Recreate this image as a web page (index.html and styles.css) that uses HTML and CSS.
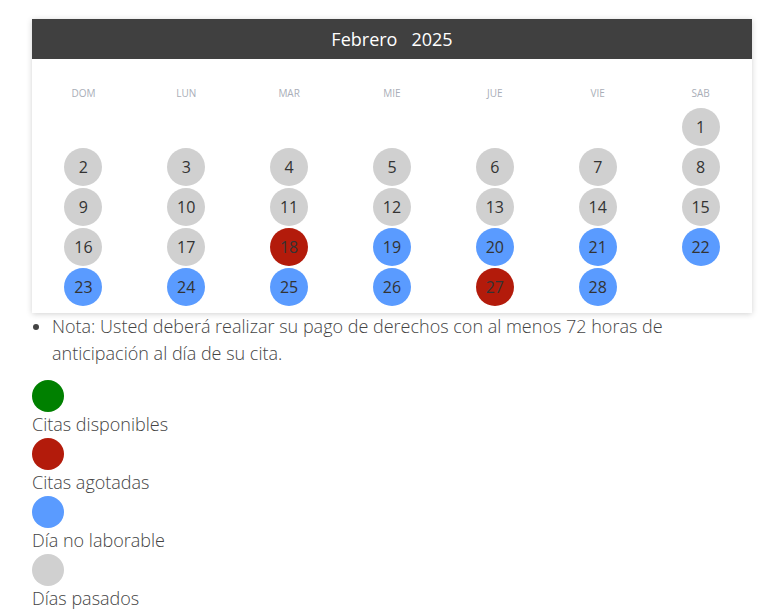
FILE: index.html
```html
<!DOCTYPE html>
<html lang="es">
<head>
<meta charset="utf-8">
<title>Calendario</title>
<link rel="stylesheet" href="styles.css">
</head>
<body>
<div class="page">
  <div class="calendar">
    <div class="cal-header">Febrero&nbsp;&nbsp; 2025</div>
    <div class="weekdays">
      <span>DOM</span><span>LUN</span><span>MAR</span><span>MIE</span><span>JUE</span><span>VIE</span><span>SAB</span>
    </div>
    <div class="days">
      <span class="empty"></span><span class="empty"></span><span class="empty"></span><span class="empty"></span><span class="empty"></span><span class="empty"></span>
      <span class="day past">1</span>
      <span class="day past">2</span><span class="day past">3</span><span class="day past">4</span><span class="day past">5</span><span class="day past">6</span><span class="day past">7</span><span class="day past">8</span>
      <span class="day past">9</span><span class="day past">10</span><span class="day past">11</span><span class="day past">12</span><span class="day past">13</span><span class="day past">14</span><span class="day past">15</span>
      <span class="day past">16</span><span class="day past">17</span><span class="day full">18</span><span class="day off">19</span><span class="day off">20</span><span class="day off">21</span><span class="day off">22</span>
      <span class="day off">23</span><span class="day off">24</span><span class="day off">25</span><span class="day off">26</span><span class="day full">27</span><span class="day off">28</span>
    </div>
  </div>
  <ul class="note">
    <li>Nota: Usted deberá realizar su pago de derechos con al menos 72 horas de anticipación al día de su cita.</li>
  </ul>
  <div class="legend">
    <div class="legend-item"><span class="dot available"></span><span class="label">Citas disponibles</span></div>
    <div class="legend-item"><span class="dot full"></span><span class="label">Citas agotadas</span></div>
    <div class="legend-item"><span class="dot off"></span><span class="label">Día no laborable</span></div>
    <div class="legend-item"><span class="dot past"></span><span class="label">Días pasados</span></div>
  </div>
</div>
</body>
</html>
```
FILE: styles.css
```css
* { box-sizing: border-box; }
body {
  margin: 0;
  font-family: "Open Sans", "Liberation Sans", sans-serif;
  color: #444;
  background: #fff;
}
.page {
  padding: 19px 19px 0 32px;
}
.calendar {
  width: 720px;
  background: #fff;
  box-shadow: 0 1px 6px rgba(0,0,0,0.18);
  padding-bottom: 6px;
}
.cal-header {
  height: 40px;
  background: #404040;
  color: #fff;
  font-size: 18px;
  line-height: 40px;
  text-align: center;
}
.weekdays {
  display: grid;
  grid-template-columns: repeat(7, 1fr);
  padding-top: 26px;
  height: 48px;
  font-size: 10px;
  line-height: 16px;
  color: #a9aeb8;
  text-align: center;
}
.days {
  display: grid;
  grid-template-columns: repeat(7, 1fr);
  grid-auto-rows: 40px;
}
.days span {
  display: flex;
  justify-content: center;
  align-items: center;
}
.day {
  width: 38px;
  height: 38px;
  margin: 1px auto;
  border-radius: 50%;
  font-size: 16px;
  color: #333;
}
.past { background: #d0d0d0; }
.full { background: #b31b0b; }
.off { background: #5a9bff; }
.available { background: #008000; }
.note {
  margin: 0;
  padding-left: 20px;
  font-size: 18px;
  line-height: 27px;
  font-weight: 300;
  color: #444;
  width: 720px;
}
.legend {
  margin-top: 13px;
}
.legend-item {
  display: flex;
  flex-direction: column;
  align-items: flex-start;
}
.dot {
  width: 32px;
  height: 32px;
  border-radius: 50%;
}
.label {
  font-size: 18px;
  line-height: 24px;
  padding-bottom: 2px;
  font-weight: 300;
  color: #444;
}
```
